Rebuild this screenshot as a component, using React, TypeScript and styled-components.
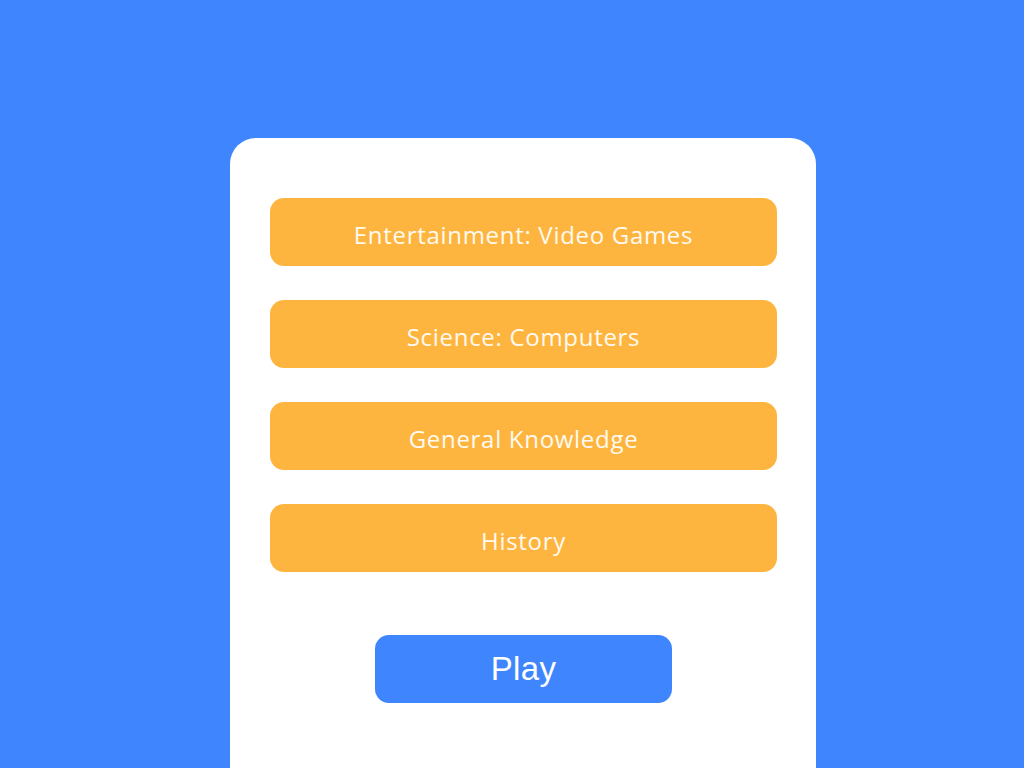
import React from "react";
import styled, { createGlobalStyle } from "styled-components";

const Global = createGlobalStyle`
  html, body { margin: 0; padding: 0; height: 100%; overflow: hidden; }
  body { background: #3f86fe; }
`;

const Page = styled.div`
  height: 768px;
  display: flex;
  justify-content: center;
  padding-left: 22px;
  padding-top: 138px;
  box-sizing: border-box;
`;

const Card = styled.div`
  width: 586px;
  height: 630px;
  background: #ffffff;
  border-radius: 26px 26px 0 0;
  box-sizing: border-box;
  padding: 60px 39px 0 40px;
  display: flex;
  flex-direction: column;
  align-items: center;
`;

const List = styled.div`
  display: flex;
  flex-direction: column;
  gap: 34px;
  width: 100%;
`;

const Category = styled.button`
  height: 68px;
  width: 100%;
  border: none;
  border-radius: 14px;
  background: #feb53f;
  color: #fffaf0;
  font-family: "Open Sans", "Noto Sans", sans-serif;
  font-size: 24px;
  letter-spacing: 0.7px;
  padding: 0;
  padding-top: 4px;
  cursor: pointer;
`;

const PlayButton = styled.button`
  margin-top: 63px;
  width: 297px;
  height: 68px;
  border: none;
  border-radius: 14px;
  background: #3f86fe;
  color: #ffffff;
  font-family: "Liberation Sans", Arial, sans-serif;
  font-size: 33px;
  letter-spacing: 0.3px;
  padding: 0;
  cursor: pointer;
`;

const categories = [
  "Entertainment: Video Games",
  "Science: Computers",
  "General Knowledge",
  "History",
];

export default function App() {
  return (
    <>
      <Global />
      <Page>
        <Card>
          <List>
            {categories.map((c) => (
              <Category key={c}>{c}</Category>
            ))}
          </List>
          <PlayButton>Play</PlayButton>
        </Card>
      </Page>
    </>
  );
}
